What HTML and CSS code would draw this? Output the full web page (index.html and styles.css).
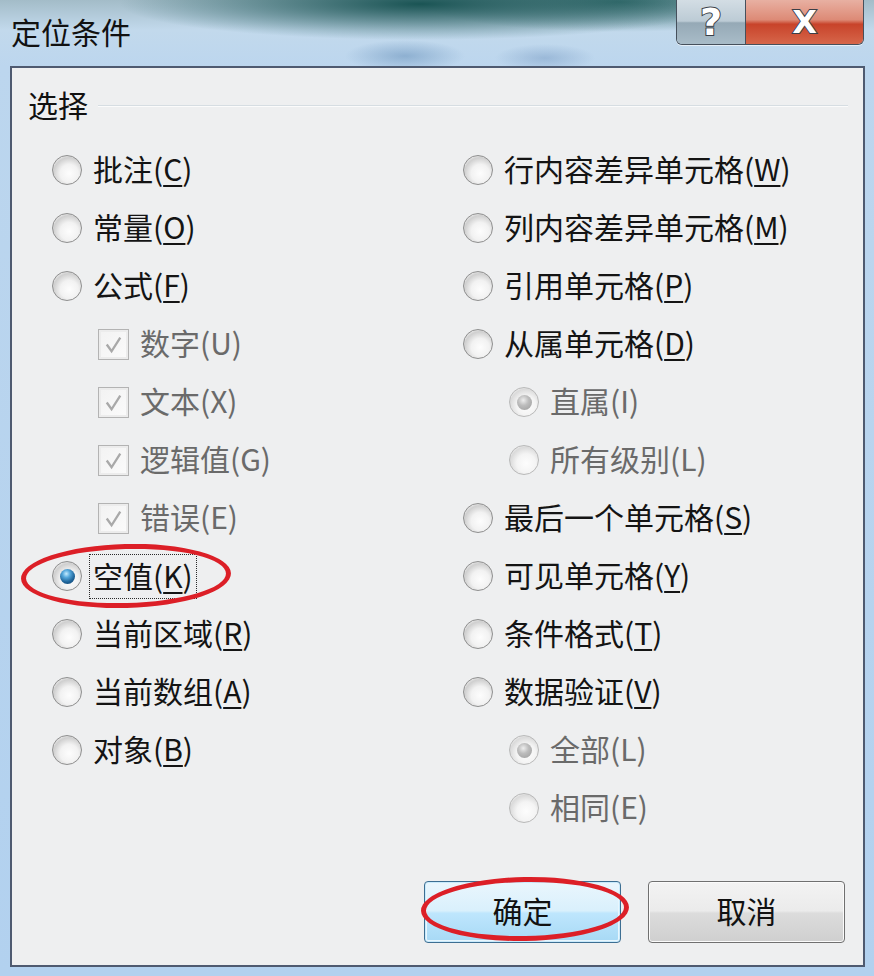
FILE: index.html
```html
<!DOCTYPE html>
<html>
<head>
    <meta charset="utf-8">
    <link rel="stylesheet" href="styles.css">
</head>
<body>
    <div class="window">
        <div class="titlebar">
            <div class="title">定位条件</div>
            <div class="caption-btns">
                <div class="cap-btn help"><span>?</span></div>
                <div class="cap-btn close"><span>X</span></div>
            </div>
        </div>

        <div class="client">
            <div class="group-head">
                <span class="group-label">选择</span>
                <span class="group-line"></span>
            </div>

            <div class="options">
                <div class="col">
                    <div class="opt"><span class="radio"></span><span class="label">批注(<u>C</u>)</span></div>
                    <div class="opt"><span class="radio"></span><span class="label">常量(<u>O</u>)</span></div>
                    <div class="opt"><span class="radio"></span><span class="label">公式(<u>F</u>)</span></div>
                    <div class="opt sub off"><span class="check"><svg viewBox="0 0 30 30"><path d="M8 15 L13 22 L22 8"/></svg></span><span class="label">数字(U)</span></div>
                    <div class="opt sub off"><span class="check"><svg viewBox="0 0 30 30"><path d="M8 15 L13 22 L22 8"/></svg></span><span class="label">文本(X)</span></div>
                    <div class="opt sub off"><span class="check"><svg viewBox="0 0 30 30"><path d="M8 15 L13 22 L22 8"/></svg></span><span class="label">逻辑值(G)</span></div>
                    <div class="opt sub off"><span class="check"><svg viewBox="0 0 30 30"><path d="M8 15 L13 22 L22 8"/></svg></span><span class="label">错误(E)</span></div>
                    <div class="opt marked">
                        <span class="radio on"></span><span class="label focus">空值(<u>K</u>)</span>
                        <span class="ring ring-opt"></span>
                    </div>
                    <div class="opt"><span class="radio"></span><span class="label">当前区域(<u>R</u>)</span></div>
                    <div class="opt"><span class="radio"></span><span class="label">当前数组(<u>A</u>)</span></div>
                    <div class="opt"><span class="radio"></span><span class="label">对象(<u>B</u>)</span></div>
                </div>
                <div class="col">
                    <div class="opt"><span class="radio"></span><span class="label">行内容差异单元格(<u>W</u>)</span></div>
                    <div class="opt"><span class="radio"></span><span class="label">列内容差异单元格(<u>M</u>)</span></div>
                    <div class="opt"><span class="radio"></span><span class="label">引用单元格(<u>P</u>)</span></div>
                    <div class="opt"><span class="radio"></span><span class="label">从属单元格(<u>D</u>)</span></div>
                    <div class="opt sub off"><span class="radio on"></span><span class="label">直属(I)</span></div>
                    <div class="opt sub off"><span class="radio"></span><span class="label">所有级别(L)</span></div>
                    <div class="opt"><span class="radio"></span><span class="label">最后一个单元格(<u>S</u>)</span></div>
                    <div class="opt"><span class="radio"></span><span class="label">可见单元格(<u>Y</u>)</span></div>
                    <div class="opt"><span class="radio"></span><span class="label">条件格式(<u>T</u>)</span></div>
                    <div class="opt"><span class="radio"></span><span class="label">数据验证(<u>V</u>)</span></div>
                    <div class="opt sub off"><span class="radio on"></span><span class="label">全部(L)</span></div>
                    <div class="opt sub off"><span class="radio"></span><span class="label">相同(E)</span></div>
                </div>
            </div>

            <div class="buttons">
                <div class="btn default"><span class="btn-text">确定</span><span class="ring ring-btn"></span></div>
                <div class="btn"><span class="btn-text">取消</span></div>
            </div>
        </div>
    </div>
</body>
</html>
```

FILE: styles.css
```css
body {
    margin: 0;
    padding: 0;
    width: 874px;
    height: 976px;
    overflow: hidden;
    font-family: "Noto Sans CJK SC", sans-serif;
    background: #b6d3ee;
}
.window {
    height: 976px;
    background:
        radial-gradient(ellipse 300px 36px at 420px 4px, rgba(26, 84, 84, 1), rgba(26, 84, 84, 0)),
        radial-gradient(ellipse 200px 30px at 620px 2px, rgba(40, 100, 100, 0.85), rgba(40, 100, 100, 0)),
        radial-gradient(ellipse 60px 16px at 405px 56px, rgba(110, 150, 190, 0.6), rgba(110, 150, 190, 0)),
        radial-gradient(ellipse 50px 14px at 545px 58px, rgba(120, 155, 195, 0.5), rgba(120, 155, 195, 0)),
        linear-gradient(#a3bcc8 0, #c2d9ec 30px, #bcd6ee 66px, #b2d1ef 100%);
}
.titlebar {
    height: 66px;
    display: flex;
    justify-content: space-between;
    align-items: flex-start;
}
.title {
    padding-left: 11px;
    line-height: 62px;
    font-size: 30px;
    color: #111;
}
.caption-btns {
    display: flex;
    margin-right: 10px;
    height: 44px;
    border: 1px solid #46505c;
    border-top: none;
    border-radius: 0 0 6px 6px;
    overflow: hidden;
    box-shadow: 0 1px 0 rgba(255, 255, 255, 0.6);
}
.cap-btn {
    height: 44px;
    display: flex;
    justify-content: center;
    align-items: center;
    font-family: "DejaVu Sans", sans-serif;
    font-weight: bold;
    color: #fff;
}
.cap-btn span {
    -webkit-text-stroke: 2px #3a3f48;
    paint-order: stroke fill;
}
.help {
    width: 68px;
    font-size: 38px;
    background: linear-gradient(#d3dde4 0, #bccbd5 48%, #95a9b6 52%, #a9bcc8 100%);
    border-right: 1px solid #46505c;
}
.close {
    width: 117px;
    font-size: 32px;
    background: linear-gradient(#e8b0a2 0, #dd8a76 45%, #c8432a 55%, #d6664a 100%);
}
.client {
    margin: 0 9px 0 10px;
    border: 2px solid #4e5a70;
    background: #eeeff0;
    padding: 18px 0 0 16px;
    height: 879px;
}
.group-head {
    height: 40px;
    display: flex;
    align-items: center;
    margin-right: 15px;
}
.group-label {
    font-size: 30px;
    color: #111;
    padding-right: 10px;
    padding-bottom: 4px;
}
.group-line {
    flex: 1;
    height: 1px;
    background: #d6dde2;
    border-bottom: 1px solid #fbfbfb;
}
.options {
    margin-top: 15px;
    padding-left: 24px;
    display: grid;
    grid-template-columns: 411px 1fr;
    height: 696px;
}
.col {
    display: flex;
    flex-direction: column;
}
.opt {
    height: 58px;
    display: flex;
    align-items: center;
    gap: 11px;
    font-size: 30px;
    color: #141414;
    position: relative;
}
.opt u {
    text-underline-offset: 4px;
    text-decoration-thickness: 2px;
}
.opt.sub {
    padding-left: 46px;
}
.opt.off {
    color: #6a6a6a;
}
.label {
    white-space: nowrap;
    padding-bottom: 5px;
}
.radio {
    width: 30px;
    height: 30px;
    box-sizing: border-box;
    border-radius: 50%;
    border: 1px solid #8f8f8f;
    background: radial-gradient(circle at 58% 62%, #fdfdfd 0, #f2f2f2 38%, #cfcfcf 66%, #e9e9e9 78%, #fafafa 100%);
    display: flex;
    justify-content: center;
    align-items: center;
    flex: none;
}
.off .radio {
    border-color: #b9b9b9;
    background: radial-gradient(circle at 58% 62%, #fdfdfd 0, #f4f4f4 40%, #dadada 68%, #efefef 80%, #fbfbfb 100%);
}
.radio.on::after {
    content: "";
    width: 15px;
    height: 15px;
    border-radius: 50%;
    background: radial-gradient(circle at 42% 32%, #c6ecff 0, #55a8dc 28%, #1f6499 62%, #123f66 100%);
}
.off .radio.on::after {
    background: radial-gradient(circle at 42% 35%, #eeeeee 0, #bdbdbd 40%, #9a9a9a 100%);
}
.check {
    width: 31px;
    height: 31px;
    box-sizing: border-box;
    border: 1px solid #b3b3b3;
    background: linear-gradient(135deg, #f2f2f2, #fbfbfb);
    box-shadow: inset 0 0 0 2px #ececec;
    flex: none;
}
.check svg {
    display: block;
    width: 29px;
    height: 29px;
}
.check path {
    fill: none;
    stroke: #a9a9a9;
    stroke-width: 2.4;
}
.focus {
    outline: 1.5px dotted #2a2a2a;
    padding: 0 3px 3px;
    margin-left: -3px;
    line-height: 40px;
}
.ring {
    position: absolute;
    border: 5px solid #dc1f27;
    border-radius: 50%;
    pointer-events: none;
}
.ring-opt {
    left: -31px;
    top: -3px;
    width: 200px;
    height: 54px;
    transform: rotate(-1.5deg);
}
.buttons {
    margin-top: 44px;
    margin-right: 18px;
    display: flex;
    justify-content: flex-end;
    gap: 27px;
}
.btn {
    width: 197px;
    height: 62px;
    box-sizing: border-box;
    border: 1px solid #707070;
    border-radius: 4px;
    display: flex;
    justify-content: center;
    align-items: center;
    font-size: 30px;
    color: #111;
    background: linear-gradient(#f3f3f3 0, #ebebeb 48%, #dcdcdc 52%, #cfcfcf 100%);
    box-shadow: inset 0 0 0 1px #fbfbfb;
    position: relative;
}
.btn-text {
    padding-bottom: 4px;
}
.btn.default {
    border-color: #3c6e92;
    background: linear-gradient(#eaf6fd 0, #d9f0fc 48%, #bee6fd 52%, #a7d9f5 100%);
    box-shadow: inset 0 0 0 1px #c9eafc, inset 0 0 0 2px #e8f6fd;
}
.ring-btn {
    left: -4px;
    top: -5px;
    width: 198px;
    height: 54px;
    transform: rotate(-1deg);
}
```
